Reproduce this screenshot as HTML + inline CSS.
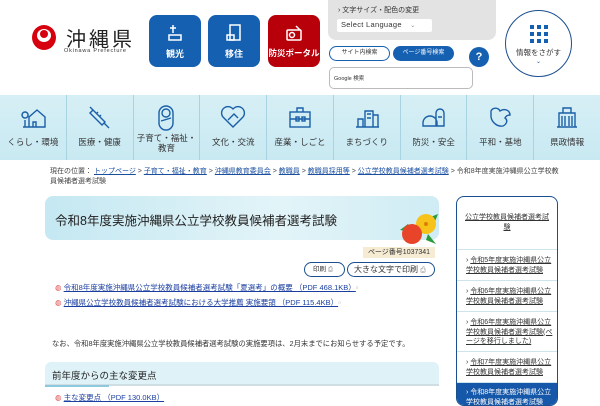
<!DOCTYPE html>
<html><head><meta charset="utf-8">
<style>
*{margin:0;padding:0;box-sizing:border-box}
body{width:600px;height:400px;overflow:hidden;background:#fff;font-family:"Liberation Sans","Noto Sans CJK JP",sans-serif;color:#333;position:relative}
.a{position:absolute}
.btn{position:absolute;top:15px;width:52px;height:52px;border-radius:8px;background:#1560b0;color:#fff;font-size:9px;font-weight:bold;text-align:center}
.btn svg{display:block;margin:8px auto 4px}
.nav{position:absolute;left:0;top:95px;width:600px;height:65px;background:linear-gradient(#d6eff5,#c9e9f2);display:flex}
.nav div{flex:1;border-right:1px solid #a8d3e0;text-align:center;font-size:8.5px;color:#333;position:relative}
.nav div:last-child{border-right:none}
.nav svg{position:absolute;left:50%;margin-left:-13px;top:10px}
.nav span{position:absolute;left:0;right:0;top:42px;line-height:10px}
.bc{font-size:7px;color:#444;line-height:10px}
.bc u{color:#1a4fa0}
.sb{font-size:7px;line-height:9.5px;color:#333}
.sb u{text-decoration:underline}
</style></head><body>
<!-- logo -->
<div class="a" style="left:32px;top:25px;width:24px;height:25px;border-radius:50%;background:#d7000f"></div>
<div class="a" style="left:37px;top:29px;width:14px;height:13px;border-radius:50%;background:#fff"></div>
<div class="a" style="left:40px;top:30px;width:8px;height:8px;border-radius:50%;background:#d7000f"></div>
<div class="a" style="left:66px;top:23px;font-size:20px;letter-spacing:3px;color:#222">沖縄県</div>
<div class="a" style="left:64px;top:48px;font-size:5.5px;letter-spacing:0.8px;color:#333">Okinawa Prefecture</div>
<!-- buttons -->
<div class="btn" style="left:149px"><svg width="20" height="20" viewBox="0 0 20 20" fill="none" stroke="#fff" stroke-width="1.5"><path d="M8 2v8M5 5h6M4 12h12v5H4z"/></svg>観光</div>
<div class="btn" style="left:208px"><svg width="20" height="20" viewBox="0 0 20 20" fill="none" stroke="#fff" stroke-width="1.5"><rect x="6" y="2" width="10" height="15"/><path d="M3 12h7v5H3z"/></svg>移住</div>
<div class="btn" style="left:268px;background:#b8000b;font-size:8.5px"><svg width="20" height="20" viewBox="0 0 20 20" fill="none" stroke="#fff" stroke-width="1.5"><rect x="3" y="7" width="14" height="10" rx="1"/><circle cx="8" cy="12" r="2.5"/><path d="M12 3l4 4"/></svg>防災ポータル</div>
<!-- gray panel -->
<div class="a" style="left:328px;top:0;width:168px;height:40px;background:#e3e3e3;border-radius:0 0 8px 8px"></div>
<div class="a" style="left:338px;top:5px;font-size:7px">› 文字サイズ・配色の変更</div>
<div class="a" style="left:337px;top:19px;width:95px;height:13px;background:#fff;border-radius:2px;font-size:7.5px;padding:1px 4px;color:#333;letter-spacing:0.3px">Select Language <span style="font-size:6px;color:#888;margin-left:6px">⌄</span></div>
<div class="a" style="left:329px;top:46px;width:61px;height:15px;border:1px solid #1560b0;border-radius:8px;font-size:6px;text-align:center;line-height:13px">サイト内検索</div>
<div class="a" style="left:393px;top:46px;width:61px;height:15px;background:#1560b0;border-radius:8px;font-size:6px;text-align:center;line-height:15px;color:#fff">ページ番号検索</div>
<div class="a" style="left:469px;top:47px;width:20px;height:20px;border-radius:50%;background:#1560b0;color:#fff;font-size:11px;font-weight:bold;text-align:center;line-height:20px">?</div>
<div class="a" style="left:329px;top:67px;width:144px;height:22px;border:1px solid #bbb;border-radius:5px;font-size:5.5px;padding:6px 4px">Google 検索</div>
<div class="a" style="left:505px;top:10px;width:67px;height:67px;border:1.5px solid #1a4f8f;border-radius:50%;text-align:center">
<div style="width:18px;margin:14px auto 0;display:grid;grid-template-columns:repeat(3,4px);gap:3px">
<i style="width:4px;height:4px;background:#1560b0"></i><i style="width:4px;height:4px;background:#1560b0"></i><i style="width:4px;height:4px;background:#1560b0"></i><i style="width:4px;height:4px;background:#1560b0"></i><i style="width:4px;height:4px;background:#1560b0"></i><i style="width:4px;height:4px;background:#1560b0"></i><i style="width:4px;height:4px;background:#1560b0"></i><i style="width:4px;height:4px;background:#1560b0"></i><i style="width:4px;height:4px;background:#1560b0"></i></div>
<div style="font-size:7.5px;margin-top:4px">情報をさがす</div><div style="font-size:6px;color:#1560b0">⌄</div></div>
<!-- nav -->
<div class="nav">
<div><svg width="26" height="24" viewBox="0 0 26 24" fill="none" stroke="#1a5fa8" stroke-width="1.4"><path d="M9 22V12l8-7 8 7v10zM3 22h22M5 22v-7M5 13a3 3 0 1 1 0.1 0M13 22v-5h3v5"/></svg><span>くらし・環境</span></div>
<div><svg width="26" height="24" viewBox="0 0 26 24" fill="none" stroke="#1a5fa8" stroke-width="1.4"><path d="M3 2l4 4M6 5l12 12-3 3L3 8zM17 18l5 5M9 9l2-2M12 12l2-2"/></svg><span>医療・健康</span></div>
<div><svg width="26" height="26" viewBox="0 0 26 26" fill="none" stroke="#1a5fa8" stroke-width="1.4"><rect x="6" y="1" width="14" height="24" rx="7"/><circle cx="13" cy="8" r="4"/><path d="M8 16l10-3"/></svg><span style="top:38px">子育て・福祉・<br>教育</span></div>
<div><svg width="26" height="24" viewBox="0 0 26 24" fill="none" stroke="#1a5fa8" stroke-width="1.4"><path d="M13 22L3 12a6 6 0 0 1 10-8 6 6 0 0 1 10 8zM8 15l6-6 4 4"/></svg><span>文化・交流</span></div>
<div><svg width="26" height="24" viewBox="0 0 26 24" fill="none" stroke="#1a5fa8" stroke-width="1.4"><rect x="3" y="7" width="20" height="15"/><path d="M10 7V3h6v4M3 14h20"/><rect x="9" y="12" width="3" height="4"/><rect x="15" y="12" width="3" height="4"/></svg><span>産業・しごと</span></div>
<div><svg width="26" height="24" viewBox="0 0 26 24" fill="none" stroke="#1a5fa8" stroke-width="1.4"><path d="M2 22h23M4 22v-8h5v8M11 22V6h8v16M19 22V10h5v12M13 9h4M13 13h4"/></svg><span>まちづくり</span></div>
<div><svg width="26" height="24" viewBox="0 0 26 24" fill="none" stroke="#1a5fa8" stroke-width="1.4"><path d="M2 21h14v-3a7 7 0 0 0-14 0zM15 21V8a3 3 0 0 1 8 0v13zM17 12h4"/></svg><span>防災・安全</span></div>
<div><svg width="26" height="24" viewBox="0 0 26 24" fill="none" stroke="#1a5fa8" stroke-width="1.4"><path d="M4 6a5 5 0 0 1 9 0c4-3 10-1 10 4-2 0-4 1-5 3 3 2 2 6-2 8-5 1-11-3-12-9z"/></svg><span>平和・基地</span></div>
<div><svg width="26" height="24" viewBox="0 0 26 24" fill="none" stroke="#1a5fa8" stroke-width="1.4"><path d="M3 22h20M5 22V8h16v14M9 8V3h8v5M8 11v10M11 11v10M15 11v10M18 11v10"/></svg><span>県政情報</span></div>
</div>
<!-- breadcrumb -->
<div class="a bc" style="left:50px;top:167px;width:510px">現在の位置： <u>トップページ</u> &gt; <u>子育て・福祉・教育</u> &gt; <u>沖縄県教育委員会</u> &gt; <u>教職員</u> &gt; <u>教職員採用等</u> &gt; <u>公立学校教員候補者選考試験</u> &gt; 令和8年度実施沖縄県公立学校教員候補者選考試験</div>
<!-- title -->
<div class="a" style="left:45px;top:196px;width:394px;height:44px;border-radius:8px;background:linear-gradient(90deg,#c5e8f2,#e2f4f8 60%,#cfecf4)"></div>
<div class="a" style="left:55px;top:210px;font-size:12.5px;color:#222">令和8年度実施沖縄県公立学校教員候補者選考試験</div>
<svg class="a" style="left:398px;top:210px" width="42" height="36" viewBox="0 0 42 36"><path d="M2 20l8-6 4 8zM30 8l10-4-4 10zM28 30l10 4-8-10z" fill="#2a9a3a"/><circle cx="28" cy="14" r="10" fill="#f7c31a"/><circle cx="14" cy="24" r="10" fill="#e8442a"/><circle cx="28" cy="14" r="2" fill="#d98000"/></svg>
<div class="a" style="left:363px;top:247px;width:72px;height:11px;background:#f6ecd4;font-size:7px;text-align:center;line-height:11px">ページ番号1037341</div>
<div class="a" style="left:304px;top:262px;width:41px;height:15px;border:1px solid #1a4f8f;border-radius:8px;font-size:6.5px;line-height:13px;padding-left:8px">印刷 <span style="color:#888">⎙</span></div>
<div class="a" style="left:347px;top:262px;width:88px;height:15px;border:1px solid #1a4f8f;border-radius:8px;font-size:8px;line-height:13px;padding-left:6px">大きな文字で印刷 <span style="color:#888;font-size:7px">⎙</span></div>
<div class="a" style="left:55px;top:282px;font-size:7.5px;color:#1a3fa0"><span style="color:#d44">◍</span> <u>令和8年度実施沖縄県公立学校教員候補者選考試験「夏選考」の概要 （PDF 468.1KB）</u><span style="color:#aaa">▫</span></div>
<div class="a" style="left:55px;top:297px;font-size:7.5px;color:#1a3fa0"><span style="color:#d44">◍</span> <u>沖縄県公立学校教員候補者選考試験における大学推薦 実施要領 （PDF 115.4KB）</u><span style="color:#aaa">▫</span></div>
<div class="a" style="left:52px;top:339px;font-size:7.3px">なお、令和8年度実施沖縄県公立学校教員候補者選考試験の実施要項は、2月末までにお知らせする予定です。</div>
<div class="a" style="left:45px;top:362px;width:394px;height:24px;background:#dff2f7;border-radius:6px 6px 0 0;border-bottom:2px solid #d0dde2;font-size:9.5px;padding:6px 7px;color:#222">前年度からの主な変更点</div>
<div class="a" style="left:45px;top:385px;width:64px;height:2px;background:#8cc9de"></div>
<div class="a" style="left:55px;top:392px;font-size:7.5px;color:#1a3fa0"><span style="color:#d44">◍</span> <u>主な変更点 （PDF 130.0KB）</u></div>
<!-- sidebar -->
<div class="a" style="left:456px;top:196px;width:102px;height:210px;border:1.5px solid #1a4f8f;border-radius:8px;overflow:hidden">
<div class="sb" style="height:53px;border-bottom:1px solid #cde4ec;text-align:center;padding:16px 6px 0"><u>公立学校教員候補者選考試験</u></div>
<div class="sb" style="height:31px;border-bottom:1px solid #cde4ec;padding:6px 4px 0 9px">› <u>令和5年度実施沖縄県公立学校教員候補者選考試験</u></div>
<div class="sb" style="height:31px;border-bottom:1px solid #cde4ec;padding:6px 4px 0 9px">› <u>令和6年度実施沖縄県公立学校教員候補者選考試験</u></div>
<div class="sb" style="height:40px;border-bottom:1px solid #cde4ec;padding:6px 4px 0 9px">› <u>令和6年度実施沖縄県公立学校教員候補者選考試験(ページを移行しました)</u></div>
<div class="sb" style="height:31px;border-bottom:1px solid #cde4ec;padding:6px 4px 0 9px">› <u>令和7年度実施沖縄県公立学校教員候補者選考試験</u></div>
<div class="sb" style="height:40px;background:#1557a8;color:#fff;padding:5px 4px 0 9px">› 令和8年度実施沖縄県公立学校教員候補者選考試験</div>
</div>
</body></html>
